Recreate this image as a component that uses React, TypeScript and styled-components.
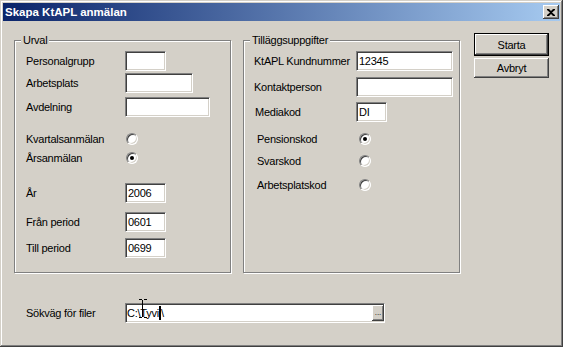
import styled, { createGlobalStyle } from 'styled-components'

const Global = createGlobalStyle`
    body {
        margin: 0;
        background: #d4d0c8;
        font-family: "Liberation Sans", Arial, sans-serif;
        font-size: 11px;
        letter-spacing: -0.25px;
        color: #000;
    }
`

const Window = styled.div`
    width: 563px;
    height: 347px;
    box-sizing: border-box;
    padding: 3px;
    background: #d4d0c8;
    box-shadow: inset -1px -1px #404040, inset 1px 1px #d4d0c8,
        inset -2px -2px #808080, inset 2px 2px #fff;
    display: flex;
    flex-direction: column;
`

const TitleBar = styled.div`
    height: 18px;
    display: flex;
    align-items: center;
    padding: 0 1px 0 2px;
    background: linear-gradient(to right, #0a246a, #a6caf0);
    color: #fff;
    font-weight: bold;
    font-size: 11.5px;
    letter-spacing: 0;
`

const Title = styled.span`
    flex: 1;
`

const CloseButton = styled.div`
    width: 16px;
    height: 14px;
    display: flex;
    align-items: center;
    justify-content: center;
    background: #d4d0c8;
    box-shadow: inset -1px -1px #404040, inset 1px 1px #fff,
        inset -2px -2px #808080, inset 2px 2px #d4d0c8;
`

const Content = styled.div`
    padding: 12px 0 0 11px;
`

const TopRow = styled.div`
    display: flex;
    align-items: flex-start;
`

const Group = styled.div<{ $ml?: number; $pl: number }>`
    position: relative;
    width: 217px;
    height: 233px;
    box-sizing: border-box;
    margin: 7px 0 0 ${p => p.$ml ?? 0}px;
    padding: 0 0 0 ${p => p.$pl}px;
    border: 1px solid #808080;
    box-shadow: 1px 1px 0 #fff, inset 1px 1px 0 #fff;
`

const Legend = styled.span`
    position: absolute;
    top: -8px;
    left: 6px;
    padding: 0 2px;
    line-height: 14px;
    background: #d4d0c8;
`

const Row = styled.div<{ $mt: number; $h?: number }>`
    display: flex;
    align-items: center;
    height: ${p => p.$h ?? 20}px;
    margin-top: ${p => p.$mt}px;
`

const Label = styled.span<{ $w: number; $indent?: number }>`
    width: ${p => p.$w}px;
    box-sizing: border-box;
    padding-left: ${p => p.$indent ?? 0}px;
    flex-shrink: 0;
    white-space: nowrap;
`

const sunken = `
    box-sizing: border-box;
    background: #fff;
    border: 1px solid;
    border-color: #808080 #fff #fff #808080;
    box-shadow: inset 1px 1px #404040, inset -1px -1px #d4d0c8;
`

const TextBox = styled.div<{ $w: number }>`
    ${sunken}
    width: ${p => p.$w}px;
    height: 20px;
    padding: 0 0 0 2px;
    display: flex;
    align-items: center;
`

const Radio = styled.span<{ $ml: number; $checked?: boolean }>`
    width: 12px;
    height: 12px;
    margin-left: ${p => p.$ml}px;
    box-sizing: border-box;
    border-radius: 50%;
    background: #fff;
    border: 1px solid;
    border-color: #808080 #fff #fff #808080;
    box-shadow: inset 1px 1px #404040, inset -1px -1px #d4d0c8;
    display: flex;
    align-items: center;
    justify-content: center;

    &::after {
        content: '';
        width: 4px;
        height: 4px;
        border-radius: 50%;
        background: ${p => (p.$checked ? '#000' : 'transparent')};
    }
`

const ButtonColumn = styled.div`
    display: flex;
    flex-direction: column;
    margin-left: 14px;
`

const Button = styled.div<{ $default?: boolean; $h: number; $mt?: number }>`
    width: 75px;
    height: ${p => p.$h}px;
    margin-top: ${p => p.$mt ?? 0}px;
    box-sizing: border-box;
    display: flex;
    align-items: center;
    justify-content: center;
    background: #d4d0c8;
    border: ${p => (p.$default ? '1px solid #000' : 'none')};
    box-shadow: inset -1px -1px #404040, inset 1px 1px #fff,
        inset -2px -2px #808080, inset 2px 2px #d4d0c8;
`

const BottomRow = styled(Row)`
    padding-left: 12px;
`

const PathField = styled.div`
    ${sunken}
    position: relative;
    width: 260px;
    height: 20px;
    padding: 1px 0 1px 1px;
    display: flex;
    align-items: center;
`

const PathText = styled.span`
    flex: 1;
    display: flex;
    align-items: center;
`

const Caret = styled.span`
    width: 2px;
    height: 14px;
    background: #000;
`

const BrowseButton = styled.div`
    width: 12px;
    height: 16px;
    box-sizing: border-box;
    display: flex;
    align-items: flex-end;
    justify-content: center;
    padding-bottom: 4px;
    background: #d4d0c8;
    font-size: 8px;
    letter-spacing: 0;
    line-height: 8px;
    box-shadow: inset -1px -1px #404040, inset 1px 1px #fff,
        inset -2px -2px #808080, inset 2px 2px #d4d0c8;
`

const MouseCursor = styled.svg`
    position: absolute;
    left: 13px;
    top: -5px;
`

export default function App() {
    return (
        <Window>
            <Global />
            <TitleBar>
                <Title>Skapa KtAPL anmälan</Title>
                <CloseButton>
                    <svg width='8' height='7' viewBox='0 0 8 7'>
                        <path d='M0 0h2l2 2 2-2h2v1L5 3.5 8 6v1H6L4 5 2 7H0V6l3-2.5L0 1z' fill='#000' />
                    </svg>
                </CloseButton>
            </TitleBar>
            <Content>
                <TopRow>
                    <Group $pl={11}>
                        <Legend>Urval</Legend>
                        <Row $mt={10}>
                            <Label $w={99}>Personalgrupp</Label>
                            <TextBox $w={41} />
                        </Row>
                        <Row $mt={2}>
                            <Label $w={99}>Arbetsplats</Label>
                            <TextBox $w={68} />
                        </Row>
                        <Row $mt={4}>
                            <Label $w={99}>Avdelning</Label>
                            <TextBox $w={85} />
                        </Row>
                        <Row $mt={14} $h={16}>
                            <Label $w={99}>Kvartalsanmälan</Label>
                            <Radio $ml={1} />
                        </Row>
                        <Row $mt={3} $h={16}>
                            <Label $w={99}>Årsanmälan</Label>
                            <Radio $ml={1} $checked />
                        </Row>
                        <Row $mt={17}>
                            <Label $w={99}>År</Label>
                            <TextBox $w={41}>2006</TextBox>
                        </Row>
                        <Row $mt={9}>
                            <Label $w={99}>Från period</Label>
                            <TextBox $w={41}>0601</TextBox>
                        </Row>
                        <Row $mt={6}>
                            <Label $w={99}>Till period</Label>
                            <TextBox $w={41}>0699</TextBox>
                        </Row>
                    </Group>
                    <Group $ml={12} $pl={10}>
                        <Legend>Tilläggsuppgifter</Legend>
                        <Row $mt={10}>
                            <Label $w={102}>KtAPL Kundnummer</Label>
                            <TextBox $w={97}>12345</TextBox>
                        </Row>
                        <Row $mt={6}>
                            <Label $w={102}>Kontaktperson</Label>
                            <TextBox $w={97} />
                        </Row>
                        <Row $mt={5}>
                            <Label $w={102} $indent={1}>Mediakod</Label>
                            <TextBox $w={31}>DI</TextBox>
                        </Row>
                        <Row $mt={9} $h={16}>
                            <Label $w={102} $indent={3}>Pensionskod</Label>
                            <Radio $ml={3} $checked />
                        </Row>
                        <Row $mt={6} $h={16}>
                            <Label $w={102} $indent={3}>Svarskod</Label>
                            <Radio $ml={3} />
                        </Row>
                        <Row $mt={8} $h={16}>
                            <Label $w={102} $indent={3}>Arbetsplatskod</Label>
                            <Radio $ml={3} />
                        </Row>
                    </Group>
                    <ButtonColumn>
                        <Button $default $h={23}>Starta</Button>
                        <Button $h={20} $mt={2}>Avbryt</Button>
                    </ButtonColumn>
                </TopRow>
                <BottomRow $mt={30}>
                    <Label $w={99}>Sökväg för filer</Label>
                    <PathField>
                        <PathText>
                            C:\Tyvi<Caret />\
                        </PathText>
                        <BrowseButton>...</BrowseButton>
                        <MouseCursor width='8' height='19' viewBox='0 0 8 19'>
                            <path d='M0 0.5h3M5 0.5h3M3.5 1v17M0 18.5h3M5 18.5h3' stroke='#000' fill='none' />
                        </MouseCursor>
                    </PathField>
                </BottomRow>
            </Content>
        </Window>
    )
}
